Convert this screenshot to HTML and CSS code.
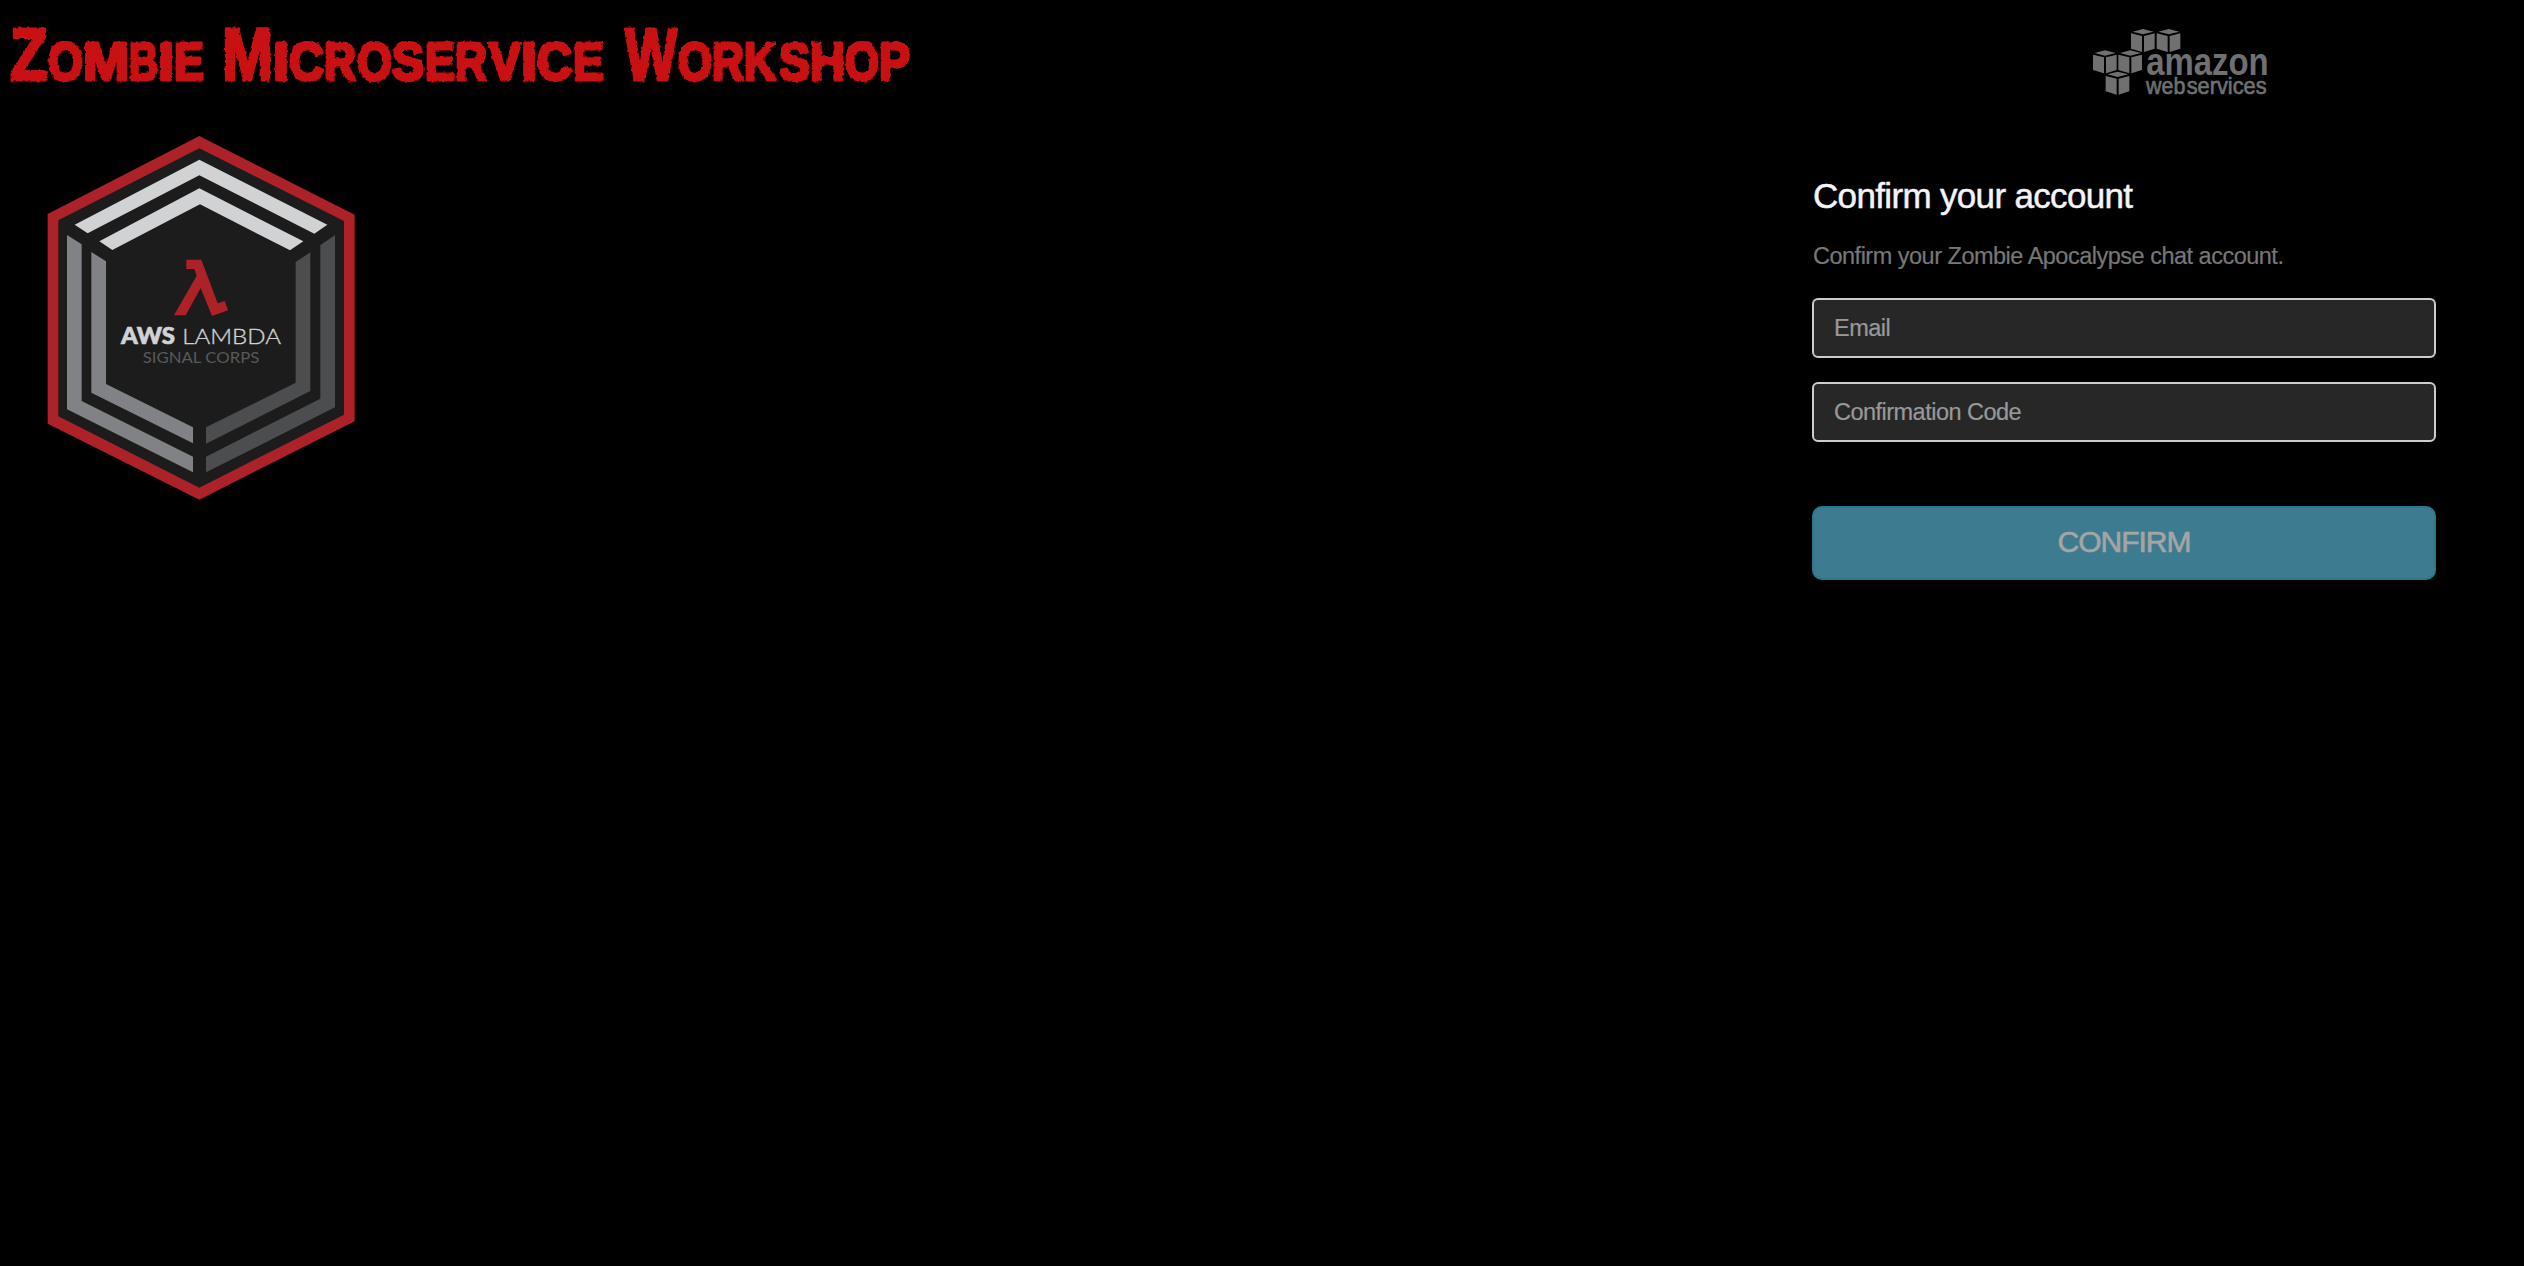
FILE: index.html
```html
<!DOCTYPE html>
<html lang="en">
<head>
<meta charset="utf-8">
<title>Zombie Microservice Workshop</title>
<link rel="stylesheet" href="styles.css">
</head>
<body>
<main class="page">
  <section class="brand">
    <svg class="title" viewBox="0 0 930 110" role="img" aria-label="Zombie Microservice Workshop">
      <defs>
        <filter id="rough" x="-2%" y="-10%" width="104%" height="120%" color-interpolation-filters="sRGB">
          <feTurbulence type="fractalNoise" baseFrequency="0.22" numOctaves="2" seed="9" result="noise"/>
          <feDisplacementMap in="SourceGraphic" in2="noise" scale="3.2" xChannelSelector="R" yChannelSelector="G"/>
          <feGaussianBlur stdDeviation="0.4"/>
        </filter>
      </defs>
      <g class="title-text" filter="url(#rough)">
        <text class="cap" y="80"><tspan x="10" textLength="38" lengthAdjust="spacingAndGlyphs">Z</tspan></text>
        <text y="80"><tspan x="48" textLength="35" lengthAdjust="spacingAndGlyphs">O</tspan><tspan x="83" textLength="46" lengthAdjust="spacingAndGlyphs">M</tspan><tspan x="129" textLength="29" lengthAdjust="spacingAndGlyphs">B</tspan><tspan x="158" textLength="16" lengthAdjust="spacingAndGlyphs">I</tspan><tspan x="174" textLength="30" lengthAdjust="spacingAndGlyphs">E</tspan></text>
        <text class="cap" y="80"><tspan x="222" textLength="51" lengthAdjust="spacingAndGlyphs">M</tspan></text>
        <text y="80"><tspan x="273" textLength="16" lengthAdjust="spacingAndGlyphs">I</tspan><tspan x="289" textLength="35" lengthAdjust="spacingAndGlyphs">C</tspan><tspan x="324" textLength="32" lengthAdjust="spacingAndGlyphs">R</tspan><tspan x="357" textLength="35" lengthAdjust="spacingAndGlyphs">O</tspan><tspan x="392" textLength="32" lengthAdjust="spacingAndGlyphs">S</tspan><tspan x="425" textLength="30" lengthAdjust="spacingAndGlyphs">E</tspan><tspan x="455" textLength="32" lengthAdjust="spacingAndGlyphs">R</tspan><tspan x="489" textLength="32" lengthAdjust="spacingAndGlyphs">V</tspan><tspan x="521" textLength="16" lengthAdjust="spacingAndGlyphs">I</tspan><tspan x="537" textLength="35" lengthAdjust="spacingAndGlyphs">C</tspan><tspan x="573" textLength="31" lengthAdjust="spacingAndGlyphs">E</tspan></text>
        <text class="cap" y="80"><tspan x="625" textLength="52" lengthAdjust="spacingAndGlyphs">W</tspan></text>
        <text y="80"><tspan x="678" textLength="34" lengthAdjust="spacingAndGlyphs">O</tspan><tspan x="712" textLength="32" lengthAdjust="spacingAndGlyphs">R</tspan><tspan x="744" textLength="32" lengthAdjust="spacingAndGlyphs">K</tspan><tspan x="779" textLength="31" lengthAdjust="spacingAndGlyphs">S</tspan><tspan x="810" textLength="35" lengthAdjust="spacingAndGlyphs">H</tspan><tspan x="845" textLength="34" lengthAdjust="spacingAndGlyphs">O</tspan><tspan x="879" textLength="31" lengthAdjust="spacingAndGlyphs">P</tspan></text>
      </g>
    </svg>

    <!-- Badge units are thirds of a pixel -->
    <svg class="badge" viewBox="0 0 1020 1170" role="img" aria-label="AWS Lambda Signal Corps">
      <path fill="#ad2229" d="M508 48 974 284V904L508 1139 53 911V282Z"/>
      <path fill="#1c1c1c" d="M508 85 942 303V884L508 1103 85 889V301Z"/>
      <path fill="#d1d2d4" d="M508 119 892 314 853 341 508 166 173 340 134 314ZM508 205 820 364 780 391 510 253 247 390 208 364Z"/>
      <path fill="#818286" d="M111 345 155 373V843L489 1010V1057L111 868ZM184 396 228 424V792L489 922V970L184 818Z"/>
      <path fill="#4c4d4f" d="M915 346V862L528 1057V1010L871 836V375ZM841 397V813L528 971V922L797 788V426Z"/>
      <path fill="#ad2229" d="M469 419H514L563 550 584 543 594 571 546 588 512 504 467 586H432L500 467 493 447H469Z"/>
      <text class="badge-aws" x="273" y="671" textLength="162" lengthAdjust="spacingAndGlyphs">AWS</text>
      <text class="badge-lambda" x="457" y="671" textLength="296" lengthAdjust="spacingAndGlyphs">LAMBDA</text>
      <text class="badge-corps" x="338" y="728" textLength="350" lengthAdjust="spacingAndGlyphs">SIGNAL CORPS</text>
    </svg>
  </section>

  <section class="account">
    <svg class="aws" viewBox="0 0 600 270" role="img" aria-label="Amazon Web Services">
      <defs>
        <g id="cube">
          <path d="M36 0 68 8 36 16 5 8Z"/>
          <path d="M0 13 33 21V69L0 59Z"/>
          <path d="M39 21 71 13V59L39 69Z"/>
        </g>
      </defs>
      <g fill="#707070">
        <use href="#cube" x="153" y="27"/>
        <use href="#cube" x="230" y="27"/>
        <use href="#cube" x="39" y="91"/>
        <use href="#cube" x="115" y="91"/>
        <use href="#cube" x="77" y="155"/>
        <text class="aws-name" x="199" y="164" textLength="367" lengthAdjust="spacingAndGlyphs">amazon</text>
        <text class="aws-sub" x="198" y="221" textLength="118" lengthAdjust="spacingAndGlyphs">web</text>
        <text class="aws-sub" x="320" y="221" textLength="240" lengthAdjust="spacingAndGlyphs">services</text>
      </g>
    </svg>
    <h1 class="heading">Confirm your account</h1>
    <p class="lead">Confirm your Zombie Apocalypse chat account.</p>
    <form class="form">
      <input class="field" type="email" placeholder="Email">
      <input class="field" type="text" placeholder="Confirmation Code">
      <button class="submit" type="button" disabled>CONFIRM</button>
    </form>
  </section>
</main>
</body>
</html>
```
FILE: styles.css
```css
* { box-sizing: border-box; }

body {
  margin: 0;
  background: #000;
  font-family: "Liberation Sans", Arial, sans-serif;
  font-size: 23.5px;
}

svg { display: block; overflow: visible; }

.page {
  display: flex;
  justify-content: space-between;
  min-height: 1266px;
  padding-right: 88px;
}

.brand {
  display: flex;
  flex-direction: column;
  align-items: flex-start;
}

.title { width: 930px; height: 110px; }

.title-text {
  fill: #c91113;
  stroke: #c91113;
  stroke-width: 3.2;
  stroke-linejoin: round;
  font-weight: 700;
  font-size: 53px;
}

.title-text .cap { font-size: 75px; }

.badge {
  width: 340px;
  height: 390px;
  margin: 10px 0 0 30px;
}

.badge text { font-family: Lato, sans-serif; }
.badge .badge-aws { font-size: 67px; font-weight: 900; fill: #d1d2d4; stroke: #d1d2d4; stroke-width: 2; }
.badge .badge-lambda { font-size: 67px; font-weight: 300; fill: #d1d2d4; stroke: #d1d2d4; stroke-width: 1; }
.badge .badge-corps { font-size: 47px; font-weight: 400; fill: #58595b; }

.account {
  display: flex;
  flex-direction: column;
  width: 624px;
  padding-top: 20px;
}

.aws {
  width: 200px;
  height: 90px;
  margin-left: 268px;
}

.aws-name { font-size: 115px; font-weight: 700; }
.aws-sub { font-size: 73px; stroke: #707070; stroke-width: 2; }

.heading {
  margin: 66px 0 0 1px;
  color: #f4f4f8;
  font-size: 35px;
  font-weight: 400;
  line-height: 40px;
  letter-spacing: -.66px;
  -webkit-text-stroke: .5px #f4f4f8;
}

.lead {
  margin: 23px 0 0 1px;
  color: #777;
  line-height: 34px;
  letter-spacing: -.5px;
  -webkit-text-stroke: .2px #777;
}

.form {
  display: flex;
  flex-direction: column;
  gap: 24px;
  margin-top: 25px;
}

.field {
  width: 100%;
  height: 60px;
  padding: 0 20px;
  border: 2px solid #ccc;
  border-radius: 6px;
  background: #272727;
  color: #ccc;
  font: inherit;
  letter-spacing: -.52px;
}

.field::placeholder { color: #999; opacity: 1; -webkit-text-stroke: .2px #999; }

.submit {
  height: 74px;
  margin-top: 40px;
  padding: 0 0 2px;
  border: 2px solid #2b788e;
  border-radius: 10px;
  background: #3d7c90;
  color: #a5a5a5;
  font-family: inherit;
  font-size: 30px;
  letter-spacing: -1px;
  -webkit-text-stroke: .6px #a5a5a5;
}
```
